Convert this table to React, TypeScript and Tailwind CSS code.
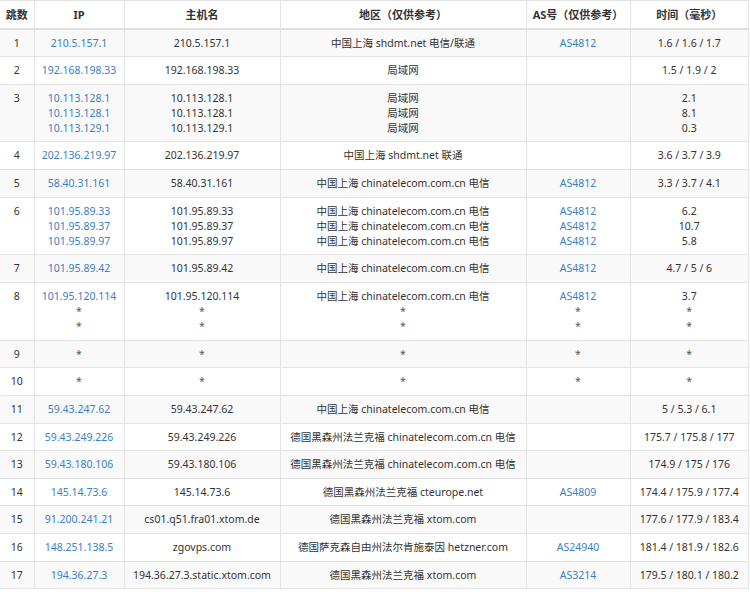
type Hop = {
  no: number;
  ips: string[];
  hosts: string[];
  regions: string[];
  asn: string[];
  times: string[];
};

const hops: Hop[] = [
  { no: 1, ips: ["210.5.157.1"], hosts: ["210.5.157.1"], regions: ["中国上海 shdmt.net 电信/联通"], asn: ["AS4812"], times: ["1.6 / 1.6 / 1.7"] },
  { no: 2, ips: ["192.168.198.33"], hosts: ["192.168.198.33"], regions: ["局域网"], asn: [""], times: ["1.5 / 1.9 / 2"] },
  { no: 3, ips: ["10.113.128.1", "10.113.128.1", "10.113.129.1"], hosts: ["10.113.128.1", "10.113.128.1", "10.113.129.1"], regions: ["局域网", "局域网", "局域网"], asn: ["", "", ""], times: ["2.1", "8.1", "0.3"] },
  { no: 4, ips: ["202.136.219.97"], hosts: ["202.136.219.97"], regions: ["中国上海 shdmt.net 联通"], asn: [""], times: ["3.6 / 3.7 / 3.9"] },
  { no: 5, ips: ["58.40.31.161"], hosts: ["58.40.31.161"], regions: ["中国上海 chinatelecom.com.cn 电信"], asn: ["AS4812"], times: ["3.3 / 3.7 / 4.1"] },
  { no: 6, ips: ["101.95.89.33", "101.95.89.37", "101.95.89.97"], hosts: ["101.95.89.33", "101.95.89.37", "101.95.89.97"], regions: ["中国上海 chinatelecom.com.cn 电信", "中国上海 chinatelecom.com.cn 电信", "中国上海 chinatelecom.com.cn 电信"], asn: ["AS4812", "AS4812", "AS4812"], times: ["6.2", "10.7", "5.8"] },
  { no: 7, ips: ["101.95.89.42"], hosts: ["101.95.89.42"], regions: ["中国上海 chinatelecom.com.cn 电信"], asn: ["AS4812"], times: ["4.7 / 5 / 6"] },
  { no: 8, ips: ["101.95.120.114", "*", "*"], hosts: ["101.95.120.114", "*", "*"], regions: ["中国上海 chinatelecom.com.cn 电信", "*", "*"], asn: ["AS4812", "*", "*"], times: ["3.7", "*", "*"] },
  { no: 9, ips: ["*"], hosts: ["*"], regions: ["*"], asn: ["*"], times: ["*"] },
  { no: 10, ips: ["*"], hosts: ["*"], regions: ["*"], asn: ["*"], times: ["*"] },
  { no: 11, ips: ["59.43.247.62"], hosts: ["59.43.247.62"], regions: ["中国上海 chinatelecom.com.cn 电信"], asn: [""], times: ["5 / 5.3 / 6.1"] },
  { no: 12, ips: ["59.43.249.226"], hosts: ["59.43.249.226"], regions: ["德国黑森州法兰克福 chinatelecom.com.cn 电信"], asn: [""], times: ["175.7 / 175.8 / 177"] },
  { no: 13, ips: ["59.43.180.106"], hosts: ["59.43.180.106"], regions: ["德国黑森州法兰克福 chinatelecom.com.cn 电信"], asn: [""], times: ["174.9 / 175 / 176"] },
  { no: 14, ips: ["145.14.73.6"], hosts: ["145.14.73.6"], regions: ["德国黑森州法兰克福 cteurope.net"], asn: ["AS4809"], times: ["174.4 / 175.9 / 177.4"] },
  { no: 15, ips: ["91.200.241.21"], hosts: ["cs01.q51.fra01.xtom.de"], regions: ["德国黑森州法兰克福 xtom.com"], asn: [""], times: ["177.6 / 177.9 / 183.4"] },
  { no: 16, ips: ["148.251.138.5"], hosts: ["zgovps.com"], regions: ["德国萨克森自由州法尔肯施泰因 hetzner.com"], asn: ["AS24940"], times: ["181.4 / 181.9 / 182.6"] },
  { no: 17, ips: ["194.36.27.3"], hosts: ["194.36.27.3.static.xtom.com"], regions: ["德国黑森州法兰克福 xtom.com"], asn: ["AS3214"], times: ["179.5 / 180.1 / 180.2"] },
];

// lines in a cell, a star is drawn small and grey
function Lines({ items, link }: { items: string[]; link?: boolean }) {
  return (
    <>
      {items.map((t, i) =>
        t === "*" ? (
          <div key={i} className="text-[#555]">*</div>
        ) : (
          <div key={i} className={link ? "text-[#3a80c4]" : ""}>
            {t === "" ? "\u00a0" : t}
          </div>
        )
      )}
    </>
  );
}

export default function App() {
  const td = "border border-[#e3e3e3] px-1 pt-[6px] pb-[5.65px] align-top text-center";

  return (
    <div
      className="w-[750px] h-[594px] bg-white text-[#333] text-[10.5px] leading-[15px]"
      style={{ fontFamily: '"Noto Sans", "Noto Sans CJK SC", sans-serif' }}
    >
      <table className="table-fixed border-collapse w-[749px] border-l-0">
        <colgroup>
          <col className="w-[34px]" />
          <col className="w-[90px]" />
          <col className="w-[156px]" />
          <col className="w-[246px]" />
          <col className="w-[104px]" />
          <col />
        </colgroup>
        <thead>
          <tr className="h-[28px]">
            {["跳数", "IP", "主机名", "地区（仅供参考）", "AS号（仅供参考）", "时间（毫秒）"].map((h, i) => (
              <th
                key={h}
                className={
                  "border border-[#e3e3e3] border-b-2 border-b-[#dedede] font-bold text-[11px] text-center px-1 " +
                  (i === 0 ? "border-l-0" : "")
                }
              >
                {h}
              </th>
            ))}
          </tr>
        </thead>
        <tbody>
          {hops.map((h) => (
            <tr key={h.no} className={h.no % 2 === 1 ? "bg-[#f9f9f9]" : "bg-white"}>
              <td className={td + " border-l-0"}>{h.no}</td>
              <td className={td}>
                <Lines items={h.ips} link />
              </td>
              <td className={td}>
                <Lines items={h.hosts} />
              </td>
              <td className={td + " whitespace-nowrap"}>
                <Lines items={h.regions} />
              </td>
              <td className={td}>
                <Lines items={h.asn} link />
              </td>
              <td className={td}>
                <Lines items={h.times} />
              </td>
            </tr>
          ))}
        </tbody>
      </table>
    </div>
  );
}
